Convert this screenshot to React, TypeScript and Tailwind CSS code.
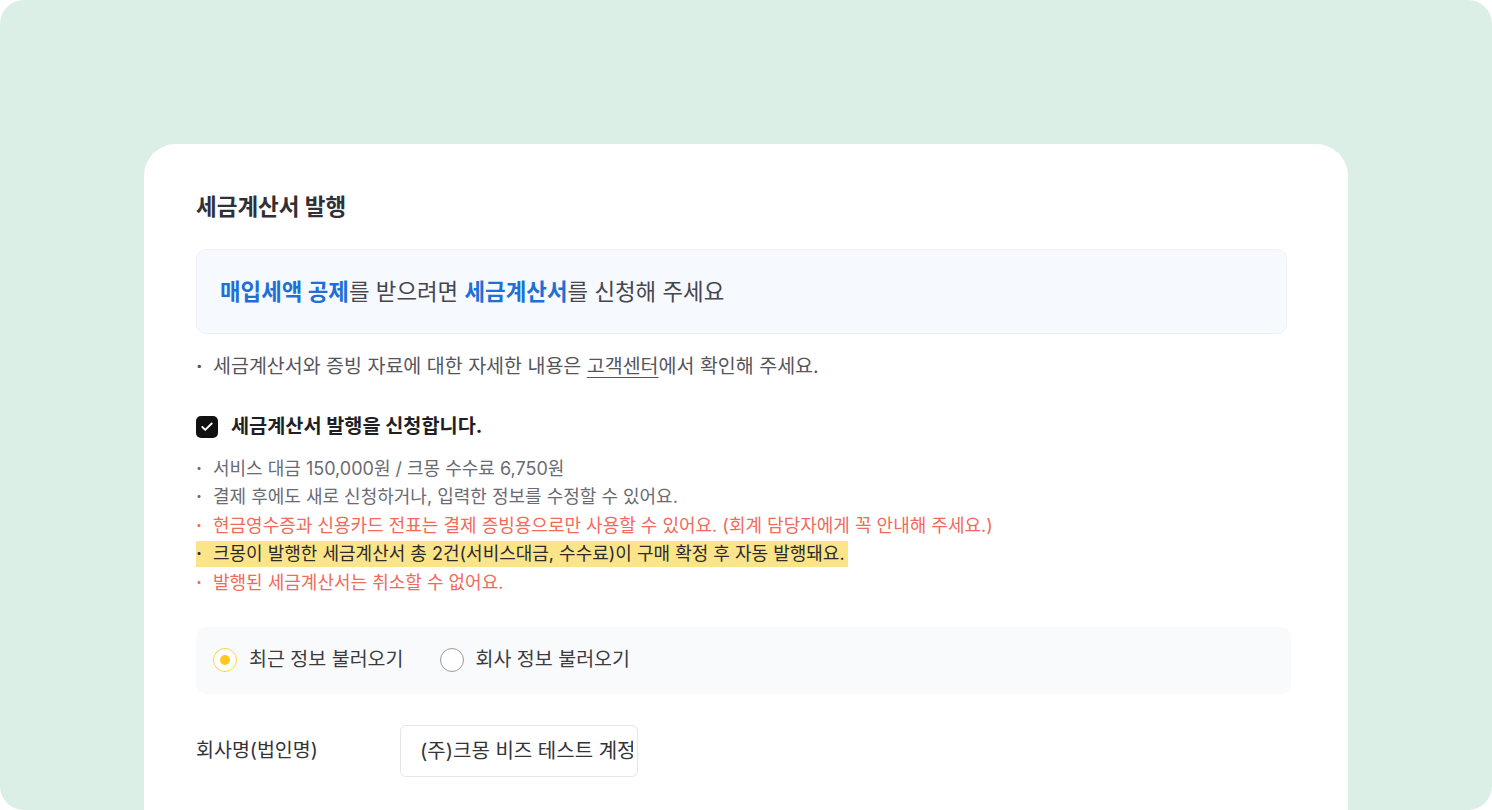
import { Check } from 'lucide-react'

const font = { fontFamily: 'Inter, "Noto Sans CJK KR", sans-serif' }

type Note = { text: string; tone: 'gray' | 'red' | 'mark' }

const notes: Note[] = [
  { text: '서비스 대금 150,000원 / 크몽 수수료 6,750원', tone: 'gray' },
  { text: '결제 후에도 새로 신청하거나, 입력한 정보를 수정할 수 있어요.', tone: 'gray' },
  { text: '현금영수증과 신용카드 전표는 결제 증빙용으로만 사용할 수 있어요. (회계 담당자에게 꼭 안내해 주세요.)', tone: 'red' },
  { text: '크몽이 발행한 세금계산서 총 2건(서비스대금, 수수료)이 구매 확정 후 자동 발행돼요.', tone: 'mark' },
  { text: '발행된 세금계산서는 취소할 수 없어요.', tone: 'red' },
]

function NoteLine({ note }: { note: Note }) {
  const tone =
    note.tone === 'red'
      ? 'text-[#F26A5A]'
      : note.tone === 'mark'
        ? 'text-[#2b2b30] bg-[#FCE488] pr-[3px]'
        : 'text-[#6b6b73]'
  return (
    <div className="flex h-[28.5px] items-center text-[18px]">
      <div className={`flex h-[26px] items-center ${tone}`}>
        <span className="w-[17px] shrink-0 font-bold">·</span>
        <span className="whitespace-nowrap">{note.text}</span>
      </div>
    </div>
  )
}

function Radio({ label, checked }: { label: string; checked?: boolean }) {
  return (
    <label className="flex items-center gap-3">
      {checked ? (
        <span className="flex h-6 w-6 items-center justify-center rounded-full border-[1.5px] border-[#FFD43B] bg-white">
          <span className="h-[10px] w-[10px] rounded-full bg-[#FFC81E]" />
        </span>
      ) : (
        <span className="h-6 w-6 rounded-full border border-[#9a9a9a] bg-white" />
      )}
      <span className="text-[19.5px] text-[#3b3b40]">{label}</span>
    </label>
  )
}

export default function App() {
  return (
    <div className="bg-white" style={font}>
      <div className="h-[810px] w-[1492px] overflow-hidden rounded-[24px] bg-[#DCEFE6] px-[144px] pt-[144px]">
        <div className="h-[720px] rounded-t-[32px] bg-white pl-[52px] pr-[57px] pt-[49px]">
          <h2 className="text-[22.5px] font-bold leading-[28px] text-[#303036]">세금계산서 발행</h2>

          <div className="mr-[4px] mt-[28px] flex h-[85px] items-center rounded-[10px] border border-[#EDF1F7] bg-[#F6F9FE] px-[23px] text-[22.4px] text-[#46464c]">
            <span className="font-bold text-[#1F6FD6]">매입세액 공제</span>를 받으려면&nbsp;
            <span className="font-bold text-[#1F6FD6]">세금계산서</span>를 신청해 주세요
          </div>

          <div className="mt-[21px] flex h-6 items-center text-[19.5px] text-[#55555b]">
            <span className="w-[17px] shrink-0 font-bold">·</span>
            <span>
              세금계산서와 증빙 자료에 대한 자세한 내용은{' '}
              <span className="underline underline-offset-[4px]">고객센터</span>에서 확인해 주세요.
            </span>
          </div>

          <div className="mt-[37px] flex h-[22px] items-center gap-[13px]">
            <span className="flex h-[22px] w-[22px] items-center justify-center rounded-[5px] bg-[#111]">
              <Check className="h-[14px] w-[14px] text-white" strokeWidth={3.2} />
            </span>
            <span className="text-[19.7px] font-bold text-[#1f1f24]">세금계산서 발행을 신청합니다.</span>
          </div>

          <div className="mt-[16px] flex flex-col">
            {notes.map((n) => (
              <NoteLine key={n.text} note={n} />
            ))}
          </div>

          <div className="mt-[30px] flex h-[67px] items-center gap-[36px] rounded-[10px] bg-[#F9FAFB] px-[17px]">
            <Radio label="최근 정보 불러오기" checked />
            <Radio label="회사 정보 불러오기" />
          </div>

          <div className="mt-[31px] flex items-center">
            <span className="w-[204px] text-[19.5px] text-[#333338]">회사명(법인명)</span>
            <div className="flex h-[52px] w-[238px] items-center rounded-[6px] border border-[#E4E6EA] pl-[19px] pr-[4px]">
              <span className="block min-w-0 flex-1 overflow-hidden whitespace-nowrap text-[20px] text-[#333338]">
                (주)크몽 비즈 테스트 계정
              </span>
            </div>
          </div>
        </div>
      </div>
    </div>
  )
}
